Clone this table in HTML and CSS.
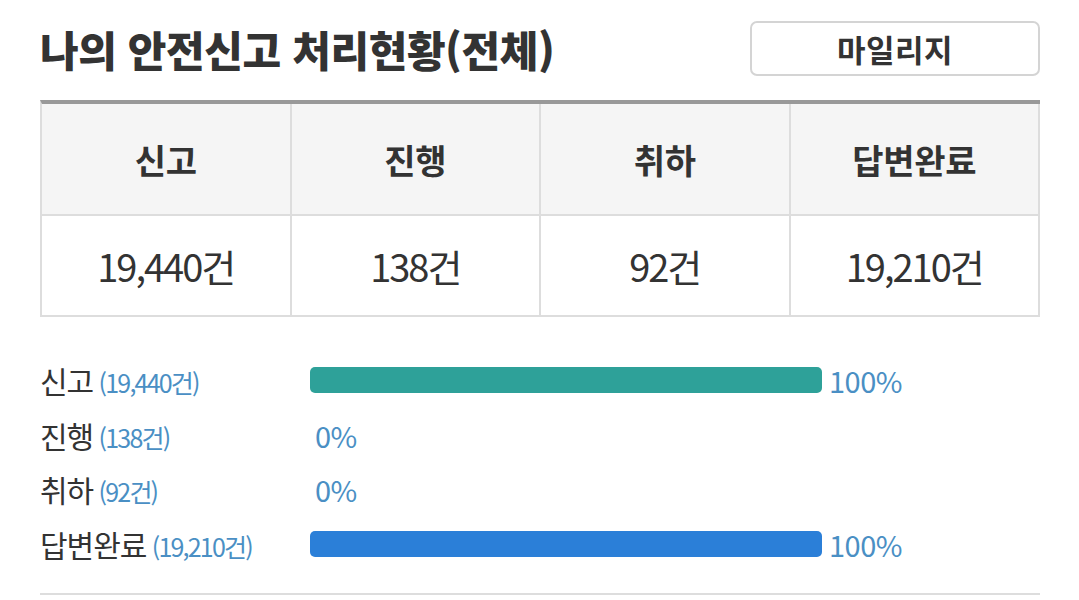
FILE: index.html
```html
<!DOCTYPE html>
<html lang="ko">
<head>
<meta charset="utf-8">
<link rel="stylesheet" href="styles.css">
</head>
<body>
<div class="wrap">
  <div class="head">
    <h1 class="title">나의 안전신고 처리현황(전체)</h1>
    <button class="mileage">마일리지</button>
  </div>
  <div class="table">
    <div class="th">신고</div>
    <div class="th">진행</div>
    <div class="th">취하</div>
    <div class="th">답변완료</div>
    <div class="td">19,440건</div>
    <div class="td">138건</div>
    <div class="td">92건</div>
    <div class="td">19,210건</div>
  </div>
  <div class="stats">
    <div class="row">
      <div class="label">신고 <span class="cnt">(19,440건)</span></div>
      <div class="barbox"><div class="bar teal" style="width:100%"></div><span class="pct">100%</span></div>
    </div>
    <div class="row">
      <div class="label">진행 <span class="cnt">(138건)</span></div>
      <div class="barbox"><span class="pct zero">0%</span></div>
    </div>
    <div class="row">
      <div class="label">취하 <span class="cnt">(92건)</span></div>
      <div class="barbox"><span class="pct zero">0%</span></div>
    </div>
    <div class="row">
      <div class="label">답변완료 <span class="cnt">(19,210건)</span></div>
      <div class="barbox"><div class="bar blue" style="width:100%"></div><span class="pct">100%</span></div>
    </div>
  </div>
  <div class="bottom-line"></div>
</div>
</body>
</html>
```
FILE: styles.css
```css
* { box-sizing: border-box; }
html, body { margin: 0; padding: 0; background: #fff; }
body { font-family: "Noto Sans CJK KR", sans-serif; color: #333; }
.wrap { width: 1000px; margin-left: 40px; padding-top: 21px; }
.head { display: flex; justify-content: space-between; align-items: center; height: 55px; }
.title { margin: 0; font-size: 42px; font-weight: 900; letter-spacing: -0.4px; color: #333; line-height: 55px; }
.mileage { width: 290px; height: 55px; border: 2px solid #d4d4d4; border-radius: 7px; background: #fff; font-family: "Noto Sans CJK KR", sans-serif; font-size: 31px; font-weight: 700; color: #333; letter-spacing: 0.5px; padding: 0; }
.table { margin-top: 24px; border-top: 4px solid #999; border-left: 2px solid #ddd; display: grid; grid-template-columns: repeat(4, 1fr); }
.th, .td { border-right: 2px solid #ddd; border-bottom: 2px solid #ddd; display: flex; align-items: center; justify-content: center; }
.th { background: #f5f5f5; height: 112px; font-weight: 700; font-size: 34px; letter-spacing: -0.3px; color: #333; }
.td { height: 101px; font-size: 38px; font-weight: 400; color: #333; letter-spacing: -2px; }
.stats { margin-top: 36px; display: flex; flex-direction: column; }
.row { display: flex; align-items: center; height: 54.5px; }
.label { width: 270px; font-size: 30px; color: #333; letter-spacing: -1px; white-space: nowrap; }
.cnt { font-size: 25px; color: #4a8fc4; letter-spacing: -1.8px; margin-left: -2px; }
.barbox { display: flex; align-items: center; width: 600px; }
.bar { height: 26px; border-radius: 5px; max-width: 512px; flex: none; }
.teal { background: #2ea199; }
.blue { background: #2b7fd8; }
.pct { font-size: 29px; color: #4a8fc4; margin-left: 7px; letter-spacing: -0.5px; }
.pct.zero { margin-left: 5px; }
.bottom-line { margin-top: 22px; height: 2px; background: #ddd; }
```
